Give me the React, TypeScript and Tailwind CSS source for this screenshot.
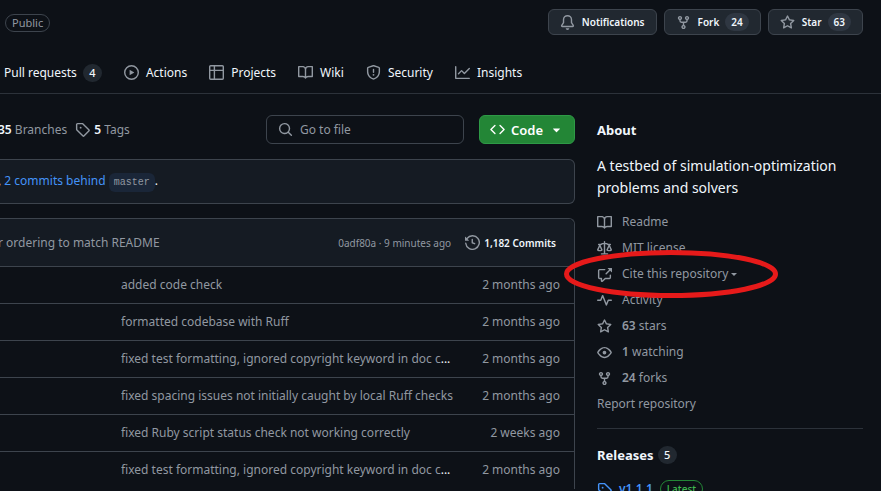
import type { ReactNode } from "react";
import clsx from "clsx";

const icons = {
  bell: "M8 16a2 2 0 0 0 1.985-1.75c.017-.137-.097-.25-.235-.25h-3.5c-.138 0-.252.113-.235.25A2 2 0 0 0 8 16ZM3 5a5 5 0 0 1 10 0v2.947c0 .05.015.098.042.139l1.703 2.555A1.519 1.519 0 0 1 13.482 13H2.518a1.516 1.516 0 0 1-1.263-2.36l1.703-2.554A.255.255 0 0 0 3 7.947Zm5-3.5A3.5 3.5 0 0 0 4.5 5v2.947c0 .346-.102.683-.294.97l-1.703 2.556a.017.017 0 0 0-.003.01l.001.006c0 .002.002.004.004.006l.006.004.007.001h10.964l.007-.001.006-.004.004-.006.001-.007a.017.017 0 0 0-.003-.01l-1.703-2.554a1.745 1.745 0 0 1-.294-.97V5A3.5 3.5 0 0 0 8 1.5Z",
  fork: "M5 5.372v.878c0 .414.336.75.75.75h4.5a.75.75 0 0 0 .75-.75v-.878a2.25 2.25 0 1 1 1.5 0v.878a2.25 2.25 0 0 1-2.25 2.25h-1.5v2.128a2.251 2.251 0 1 1-1.5 0V8.5h-1.5A2.25 2.25 0 0 1 3.5 6.25v-.878a2.25 2.25 0 1 1 1.5 0ZM5 3.25a.75.75 0 1 0-1.5 0 .75.75 0 0 0 1.5 0Zm6.75.75a.75.75 0 1 0 0-1.5.75.75 0 0 0 0 1.5Zm-3 8.75a.75.75 0 1 0-1.5 0 .75.75 0 0 0 1.5 0Z",
  star: "M8 .25a.75.75 0 0 1 .673.418l1.882 3.815 4.21.612a.75.75 0 0 1 .416 1.279l-3.046 2.97.719 4.192a.751.751 0 0 1-1.088.791L8 12.347l-3.766 1.98a.75.75 0 0 1-1.088-.79l.72-4.194L.818 6.374a.75.75 0 0 1 .416-1.28l4.21-.611L7.327.668A.75.75 0 0 1 8 .25Zm0 2.445L6.615 5.5a.75.75 0 0 1-.564.41l-3.097.45 2.24 2.184a.75.75 0 0 1 .216.664l-.528 3.084 2.769-1.456a.75.75 0 0 1 .698 0l2.77 1.456-.53-3.084a.75.75 0 0 1 .216-.664l2.24-2.183-3.096-.45a.75.75 0 0 1-.564-.41L8 2.694Z",
  play: "M8 0a8 8 0 1 1 0 16A8 8 0 0 1 8 0ZM1.5 8a6.5 6.5 0 1 0 13 0 6.5 6.5 0 0 0-13 0Zm4.879-2.773 4.264 2.559a.25.25 0 0 1 0 .428l-4.264 2.559A.25.25 0 0 1 6 10.559V5.442a.25.25 0 0 1 .379-.215Z",
  table:
    "M0 1.75C0 .784.784 0 1.75 0h12.5C15.216 0 16 .784 16 1.75v12.5A1.75 1.75 0 0 1 14.25 16H1.75A1.75 1.75 0 0 1 0 14.25ZM6.5 6.5v8h7.75a.25.25 0 0 0 .25-.25V6.5Zm8-1.5V1.75a.25.25 0 0 0-.25-.25H6.5V5Zm-13 1.5v7.75c0 .138.112.25.25.25H5v-8ZM5 5V1.5H1.75a.25.25 0 0 0-.25.25V5Z",
  book: "M0 1.75A.75.75 0 0 1 .75 1h4.253c1.227 0 2.317.59 3 1.501A3.743 3.743 0 0 1 11.006 1h4.245a.75.75 0 0 1 .75.75v10.5a.75.75 0 0 1-.75.75h-4.507a2.25 2.25 0 0 0-1.591.659l-.622.621a.75.75 0 0 1-1.06 0l-.622-.621A2.25 2.25 0 0 0 5.258 13H.75a.75.75 0 0 1-.75-.75Zm7.251 10.324.004-5.073-.002-2.253A2.25 2.25 0 0 0 5.003 2.5H1.5v9h3.757a3.75 3.75 0 0 1 1.994.574ZM8.755 4.75l-.004 7.322a3.752 3.752 0 0 1 1.992-.572H14.5v-9h-3.495a2.25 2.25 0 0 0-2.25 2.25Z",
  shield:
    "M7.467.133a1.748 1.748 0 0 1 1.066 0l5.25 1.68A1.75 1.75 0 0 1 15 3.48V7c0 1.566-.32 3.182-1.303 4.682-.983 1.498-2.585 2.813-5.032 3.855a1.697 1.697 0 0 1-1.33 0c-2.447-1.042-4.049-2.357-5.032-3.855C1.32 10.182 1 8.566 1 7V3.48a1.75 1.75 0 0 1 1.217-1.667Zm.61 1.429a.25.25 0 0 0-.153 0l-5.25 1.68a.25.25 0 0 0-.174.238V7c0 1.358.275 2.666 1.057 3.86.784 1.194 2.121 2.34 4.366 3.297a.196.196 0 0 0 .154 0c2.245-.956 3.582-2.104 4.366-3.298C13.225 9.666 13.5 8.36 13.5 7V3.48a.251.251 0 0 0-.174-.237l-5.25-1.68ZM8.75 4.75v3a.75.75 0 0 1-1.5 0v-3a.75.75 0 0 1 1.5 0ZM9 10.5a1 1 0 1 1-2 0 1 1 0 0 1 2 0Z",
  graph:
    "M1.5 1.75V13.5h13.75a.75.75 0 0 1 0 1.5H.75a.75.75 0 0 1-.75-.75V1.75a.75.75 0 0 1 1.5 0Zm14.28 2.53-5.25 5.25a.75.75 0 0 1-1.06 0L7 7.06 4.28 9.78a.751.751 0 0 1-1.042-.018.751.751 0 0 1-.018-1.042l3.25-3.25a.75.75 0 0 1 1.06 0L10 7.94l4.72-4.72a.751.751 0 0 1 1.042.018.751.751 0 0 1 .018 1.042Z",
  tag: "M1 7.775V2.75C1 1.784 1.784 1 2.75 1h5.025c.464 0 .91.184 1.238.513l6.25 6.25a1.75 1.75 0 0 1 0 2.474l-5.026 5.026a1.75 1.75 0 0 1-2.474 0l-6.25-6.25A1.752 1.752 0 0 1 1 7.775Zm1.5 0c0 .066.026.13.073.177l6.25 6.25a.25.25 0 0 0 .354 0l5.025-5.025a.25.25 0 0 0 0-.354l-6.25-6.25a.25.25 0 0 0-.177-.073H2.75a.25.25 0 0 0-.25.25ZM6 5a1 1 0 1 1 0 2 1 1 0 0 1 0-2Z",
  search:
    "M10.68 11.74a6 6 0 0 1-7.922-8.982 6 6 0 0 1 8.982 7.922l3.04 3.04a.749.749 0 0 1-.326 1.275.749.749 0 0 1-.734-.215ZM11.5 7a4.499 4.499 0 1 0-8.997 0A4.499 4.499 0 0 0 11.5 7Z",
  code: "m11.28 3.22 4.25 4.25a.75.75 0 0 1 0 1.06l-4.25 4.25a.749.749 0 0 1-1.275-.326.749.749 0 0 1 .215-.734L13.94 8l-3.72-3.72a.749.749 0 0 1 .326-1.275.749.749 0 0 1 .734.215Zm-6.56 0a.751.751 0 0 1 1.042.018.751.751 0 0 1 .018 1.042L2.06 8l3.72 3.72a.749.749 0 0 1-.326 1.275.749.749 0 0 1-.734-.215L.47 8.53a.75.75 0 0 1 0-1.06Z",
  triangle:
    "m4.427 7.427 3.396 3.396a.25.25 0 0 0 .354 0l3.396-3.396A.25.25 0 0 0 11.396 7H4.604a.25.25 0 0 0-.177.427Z",
  history:
    "m.427 1.927 1.215 1.215a8.002 8.002 0 1 1-1.6 5.685.75.75 0 1 1 1.493-.154 6.5 6.5 0 1 0 1.18-4.458l1.358 1.358A.25.25 0 0 1 3.896 6H.25A.25.25 0 0 1 0 5.75V2.104a.25.25 0 0 1 .427-.177ZM7.75 4a.75.75 0 0 1 .75.75v2.992l2.028.812a.75.75 0 0 1-.557 1.392l-2.5-1A.751.751 0 0 1 7 8.25v-3.5A.75.75 0 0 1 7.75 4Z",
  law: "M8.75.75V2h.985c.304 0 .603.08.867.231l1.29.736c.038.022.08.033.124.033h2.234a.75.75 0 0 1 0 1.5h-.427l2.111 4.692a.75.75 0 0 1-.154.838l-.53-.53.529.531-.001.002-.002.002-.006.006-.006.005-.01.01-.045.04c-.21.176-.441.327-.686.45C14.556 10.78 13.88 11 13 11a4.498 4.498 0 0 1-2.023-.454 3.544 3.544 0 0 1-.686-.45l-.045-.04-.016-.015-.006-.006-.004-.004v-.001a.75.75 0 0 1-.154-.838L12.178 4.5h-.162c-.305 0-.604-.079-.868-.231l-1.29-.736a.245.245 0 0 0-.124-.033H8.75V13h2.5a.75.75 0 0 1 0 1.5h-6.5a.75.75 0 0 1 0-1.5h2.5V3.5h-.984a.245.245 0 0 0-.124.033l-1.289.737c-.265.15-.564.23-.869.23h-.162l2.112 4.692a.75.75 0 0 1-.154.838l-.53-.53.529.531-.001.002-.002.002-.006.006-.016.015-.045.04c-.21.176-.441.327-.686.45C4.556 10.78 3.88 11 3 11a4.498 4.498 0 0 1-2.023-.454 3.544 3.544 0 0 1-.686-.45l-.045-.04-.016-.015-.006-.006-.004-.004v-.001a.75.75 0 0 1-.154-.838L2.178 4.5H1.75a.75.75 0 0 1 0-1.5h2.234a.249.249 0 0 0 .125-.033l1.288-.737c.265-.15.564-.23.869-.23h.984V.75a.75.75 0 0 1 1.5 0Zm2.945 8.477c.285.135.718.273 1.305.273s1.02-.138 1.305-.273L13 6.327Zm-10 0c.285.135.718.273 1.305.273s1.02-.138 1.305-.273L3 6.327Z",
  cite: "M2.75 3.5a.25.25 0 0 0-.25.25v7.5c0 .138.112.25.25.25h2a.75.75 0 0 1 .75.75v2.19l2.72-2.72a.749.749 0 0 1 .53-.22h4.5a.25.25 0 0 0 .25-.25v-2.5a.75.75 0 0 1 1.5 0v2.5A1.75 1.75 0 0 1 13.25 13H9.06l-2.573 2.573A1.458 1.458 0 0 1 4 14.543V13H2.75A1.75 1.75 0 0 1 1 11.25v-7.5C1 2.784 1.784 2 2.75 2h5.5a.75.75 0 0 1 0 1.5ZM16 1.25v4.146a.25.25 0 0 1-.427.177L14.03 4.03l-3.75 3.75a.749.749 0 0 1-1.275-.326.749.749 0 0 1 .215-.734l3.75-3.75-1.543-1.543A.25.25 0 0 1 11.604 1h4.146a.25.25 0 0 1 .25.25Z",
  pulse:
    "M6 2c.306 0 .582.187.696.471L10 10.731l1.304-3.26A.751.751 0 0 1 12 7h3.25a.75.75 0 0 1 0 1.5h-2.742l-1.812 4.528a.751.751 0 0 1-1.392 0L6 4.77 4.696 8.03A.75.75 0 0 1 4 8.5H.75a.75.75 0 0 1 0-1.5h2.742l1.812-4.529A.751.751 0 0 1 6 2Z",
  eye: "M8 2c1.981 0 3.671.992 4.933 2.078 1.27 1.091 2.187 2.345 2.637 3.023a1.62 1.62 0 0 1 0 1.798c-.45.678-1.367 1.932-2.637 3.023C11.67 13.008 9.981 14 8 14c-1.981 0-3.671-.992-4.933-2.078C1.797 10.83.88 9.576.43 8.898a1.62 1.62 0 0 1 0-1.798c.45-.677 1.367-1.931 2.637-3.022C4.33 2.992 6.019 2 8 2ZM1.679 7.932a.12.12 0 0 0 0 .136c.411.622 1.241 1.75 2.366 2.717C5.176 11.758 6.527 12.5 8 12.5c1.473 0 2.825-.742 3.955-1.715 1.124-.967 1.954-2.096 2.366-2.717a.12.12 0 0 0 0-.136c-.412-.621-1.242-1.75-2.366-2.717C10.824 4.242 9.473 3.5 8 3.5c-1.473 0-2.825.742-3.955 1.715-1.124.967-1.954 2.096-2.366 2.717ZM8 10a2 2 0 1 1-.001-3.999A2 2 0 0 1 8 10Z",
};

type IconName = keyof typeof icons;

const Icon = (props: { name: IconName; className?: string }) => (
  <svg
    viewBox="0 0 16 16"
    aria-hidden="true"
    className={clsx("size-[15px] shrink-0 fill-current", props.className)}
  >
    <path d={icons[props.name]} />
  </svg>
);

const Counter = (props: { children: ReactNode }) => (
  <span className="flex h-[18px] min-w-[19px] items-center justify-center rounded-full bg-[#212830] px-1.5 text-[11px] font-medium text-[#f0f6fc]">
    {props.children}
  </span>
);

type HeaderButtonProps = { icon: IconName; label: string; count?: number };

const HeaderButton = (props: HeaderButtonProps) => (
  <button
    type="button"
    className="flex h-[26px] items-center rounded-md border border-[#3d444d] bg-[#212830] px-[11px] text-[10px] font-semibold text-[#f0f6fc]"
  >
    <Icon name={props.icon} className="mr-[7px] text-[#9198a1]" />
    {props.label}
    {props.count && (
      <span className="ml-1.5 rounded-full bg-[#2f3742] px-1.5 leading-[18px]">
        {props.count}
      </span>
    )}
  </button>
);

const tabs: { icon: IconName; label: string }[] = [
  { icon: "play", label: "Actions" },
  { icon: "table", label: "Projects" },
  { icon: "book", label: "Wiki" },
  { icon: "shield", label: "Security" },
  { icon: "graph", label: "Insights" },
];

type Commit = { message: string; age: string; shortened?: boolean };

const commits: Commit[] = [
  { message: "added code check", age: "2 months ago" },
  { message: "formatted codebase with Ruff", age: "2 months ago" },
  {
    message: "fixed test formatting, ignored copyright keyword in doc c",
    age: "2 months ago",
    shortened: true,
  },
  {
    message: "fixed spacing issues not initially caught by local Ruff checks",
    age: "2 months ago",
  },
  {
    message: "fixed Ruby script status check not working correctly",
    age: "2 weeks ago",
  },
  {
    message: "fixed test formatting, ignored copyright keyword in doc c",
    age: "2 months ago",
    shortened: true,
  },
];

const SidebarLink = (props: {
  icon: IconName;
  count?: number;
  children: ReactNode;
}) => (
  <li>
    <a href="#" className="flex h-[26px] items-center gap-2.5">
      <Icon name={props.icon} />
      <span>
        {props.count && (
          <strong className="font-semibold">{props.count} </strong>
        )}
        {props.children}
      </span>
    </a>
  </li>
);

const Header = () => (
  <header className="border-b border-[#2c323a]">
    <div className="flex items-start justify-between pt-[9px] pr-[18px] pl-[5px]">
      <span className="mt-[5px] rounded-full border border-[#3d444d] px-1.5 text-[11px] leading-4 text-[#9198a1]">
        Public
      </span>
      <div className="flex gap-[7px]">
        <HeaderButton icon="bell" label="Notifications" />
        <HeaderButton icon="fork" label="Fork" count={24} />
        <HeaderButton icon="star" label="Star" count={63} />
      </div>
    </div>
    <nav className="mt-[17px] flex h-[41px] items-center gap-[22px] pl-1 whitespace-nowrap text-[#f0f6fc]">
      <a href="#" className="flex items-center gap-1.5">
        Pull requests
        <Counter>4</Counter>
      </a>
      {tabs.map((tab) => (
        <a key={tab.label} href="#" className="flex items-center gap-[7px]">
          <Icon name={tab.icon} className="text-[#9198a1]" />
          {tab.label}
        </a>
      ))}
    </nav>
  </header>
);

const FileBrowser = () => (
  <div className="min-w-0 flex-1">
    <div className="flex items-center">
      <div className="-ml-0.5 flex flex-1 items-center gap-2 whitespace-nowrap">
        <a href="#">
          <strong className="font-semibold text-[#f0f6fc]">35</strong> Branches
        </a>
        <a href="#" className="flex items-center gap-1">
          <Icon name="tag" />
          <span>
            <strong className="font-semibold text-[#f0f6fc]">5</strong> Tags
          </span>
        </a>
      </div>
      <label className="flex h-[29px] w-[198px] items-center gap-[7px] rounded-md border border-[#3d444d] px-[11px]">
        <Icon name="search" />
        <input
          type="text"
          aria-label="Go to file"
          placeholder="Go to file"
          className="w-full min-w-0 bg-transparent outline-none placeholder:text-[#9198a1]"
        />
      </label>
      <button
        type="button"
        className="ml-[15px] flex h-[29px] items-center gap-1.5 rounded-md border border-[#2e9a46] bg-[#238636] px-[10px] text-[13px] font-semibold text-white"
      >
        <Icon name="code" />
        Code
        <Icon name="triangle" />
      </button>
    </div>

    <div className="mt-[15px] flex h-[45px] items-center rounded-r-md border border-l-0 border-[#3d444d] bg-[#151b23] whitespace-nowrap text-[#f0f6fc]">
      <p className="-ml-0.5">
        ,{" "}
        <a href="#" className="text-[#4493f8]">
          2 commits behind
        </a>{" "}
        <code className="rounded-md bg-[#1a2638] px-[5px] py-1 font-['Liberation_Mono',monospace] text-[10px] text-[#9198a1]">
          master
        </code>
        .
      </p>
    </div>

    <div className="mt-3.5 rounded-tr-md border-t border-r border-[#3d444d]">
      <div className="flex h-[47px] items-center rounded-tr-md bg-[#151b23] pr-[18px] whitespace-nowrap">
        <a href="#" className="-ml-0.5 flex-1">
          r ordering to match README
        </a>
        <span className="text-[10px]">0adf80a · 9 minutes ago</span>
        <a
          href="#"
          className="ml-3.5 flex items-center gap-1 text-[10px] font-semibold text-[#f0f6fc]"
        >
          <Icon name="history" className="text-[#9198a1]" />
          1,182 Commits
        </a>
      </div>
      <table className="w-full table-fixed border-collapse">
        <tbody>
          {commits.map((commit, i) => (
            <tr key={i} className="h-[37px] border-t border-[#3d444d]">
              <td className="w-[121px]" />
              <td className="truncate text-[#f0f6fc]">
                <a href="#" className="text-[#9198a1]">
                  {commit.message}
                </a>
                {commit.shortened && "..."}
              </td>
              <td className="w-[110px] pr-3.5 text-right whitespace-nowrap">
                {commit.age}
              </td>
            </tr>
          ))}
        </tbody>
      </table>
    </div>
  </div>
);

const Sidebar = () => (
  <aside className="w-[266px] shrink-0">
    <h2 className="text-[13px] leading-[30px] font-bold text-[#f0f6fc]">
      About
    </h2>
    <p className="mt-2.5 text-sm leading-[22px] text-[#f0f6fc]">
      A testbed of simulation-optimization problems and solvers
    </p>
    <ul className="mt-2.5">
      <SidebarLink icon="book">Readme</SidebarLink>
      <SidebarLink icon="law">MIT license</SidebarLink>
      <li className="relative">
        <button type="button" className="flex h-[26px] items-center gap-2.5">
          <Icon name="cite" />
          <span className="flex items-center gap-[3px]">
            Cite this repository
            <svg viewBox="0 0 6 3" aria-hidden="true" className="w-1.5 fill-current">
              <path d="M0 0h6L3 3Z" />
            </svg>
          </span>
        </button>
        <svg
          viewBox="0 0 214 48"
          aria-hidden="true"
          className="pointer-events-none absolute -top-[11px] -left-[33px] z-10 w-[214px] max-w-none"
        >
          <ellipse
            cx="107"
            cy="24"
            rx="104.5"
            ry="21.5"
            fill="none"
            stroke="#e61a1a"
            strokeWidth="5"
          />
        </svg>
      </li>
      <SidebarLink icon="pulse">Activity</SidebarLink>
      <SidebarLink icon="star" count={63}>
        stars
      </SidebarLink>
      <SidebarLink icon="eye" count={1}>
        watching
      </SidebarLink>
      <SidebarLink icon="fork" count={24}>
        forks
      </SidebarLink>
    </ul>
    <a href="#" className="block leading-[26px]">
      Report repository
    </a>
    <section className="mt-[11px] border-t border-[#2c323a] pt-[15px]">
      <h2 className="flex items-center gap-1 text-[13px] leading-[22px] font-bold text-[#f0f6fc]">
        Releases <Counter>5</Counter>
      </h2>
      <a
        href="#"
        className="mt-[13px] flex items-center gap-[7px] font-semibold text-[#4493f8]"
      >
        <Icon name="tag" />
        v1.1.1
        <span className="rounded-full border border-[#238636] px-1.5 text-[10px] leading-4 font-medium text-[#3fb950]">
          Latest
        </span>
      </a>
    </section>
  </aside>
);

export default function App() {
  return (
    <div className="h-screen overflow-hidden bg-[#0d1117] font-['Noto_Sans',sans-serif] text-xs leading-5 text-[#9198a1]">
      <Header />
      <main className="flex gap-[22px] pt-[21px] pr-[18px]">
        <FileBrowser />
        <Sidebar />
      </main>
    </div>
  );
}
